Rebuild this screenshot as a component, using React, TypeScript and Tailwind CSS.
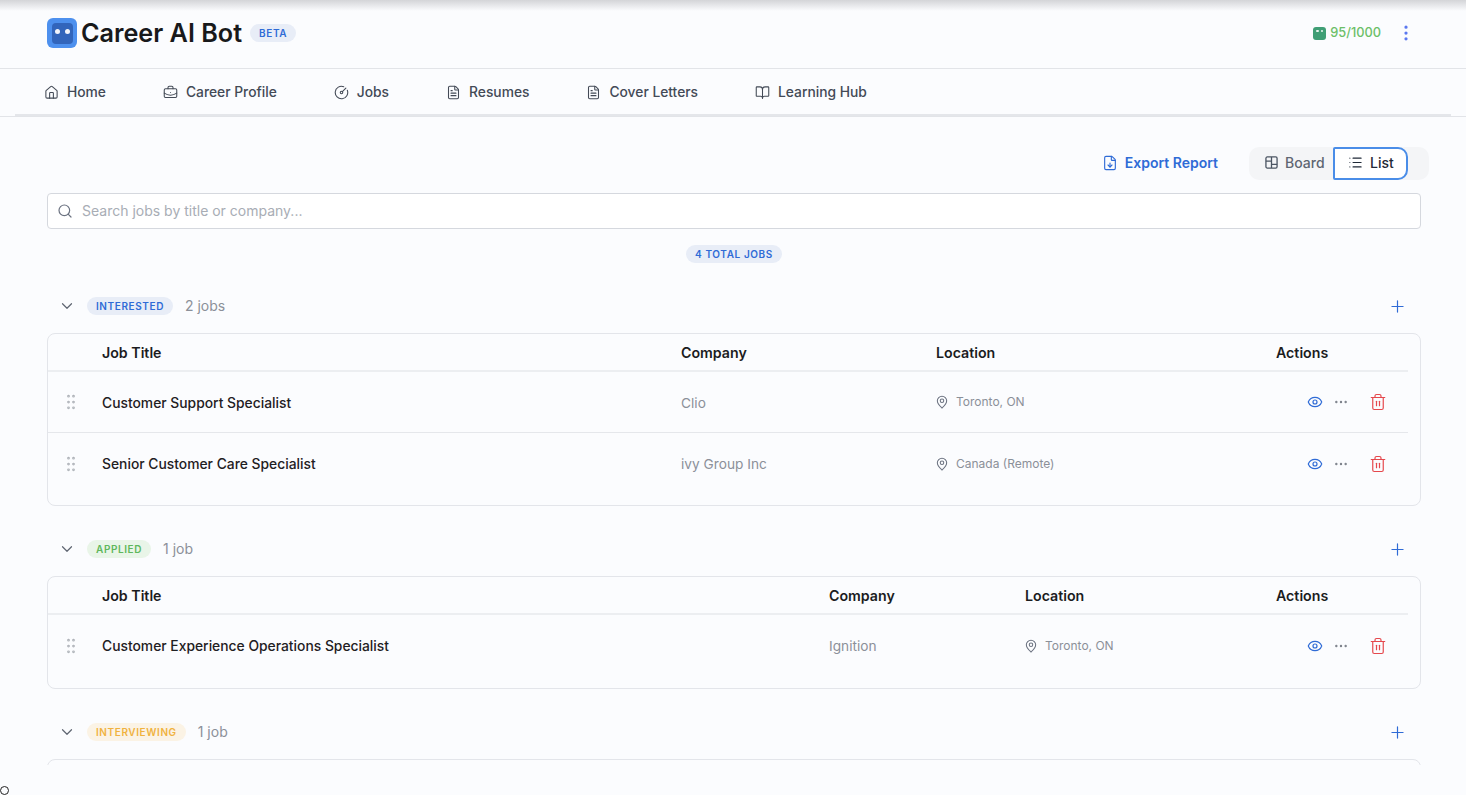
import { House, BriefcaseBusiness, CircleGauge, FileText, BookOpen, FileDown, List, Search, ChevronDown, Plus, GripVertical, MapPin, Eye, Ellipsis, Trash2, EllipsisVertical } from "lucide-react";

const tabs = [
  { label: "Home", Icon: House },
  { label: "Career Profile", Icon: BriefcaseBusiness },
  { label: "Jobs", Icon: CircleGauge },
  { label: "Resumes", Icon: FileText },
  { label: "Cover Letters", Icon: FileText },
  { label: "Learning Hub", Icon: BookOpen },
];

function BoardIcon() {
  return (
    <svg width="13" height="13" viewBox="0 0 14 14" fill="none" stroke="#4b5563" strokeWidth="1.4">
      <rect x="1" y="1" width="12" height="12" rx="1.5" />
      <path d="M7 1v12M1 5.5h6M7 9h6" />
    </svg>
  );
}

function GroupHead({ status, pill, count }: { status: string; pill: string; count: string }) {
  return (
    <div className="flex items-center h-[18px] pl-[11px] pr-[14px]">
      <ChevronDown size={18} strokeWidth={1.6} className="text-[#5f6672]" />
      <span className={`ml-[11px] h-[18px] px-[9px] pt-px rounded-full flex items-center text-[10px] font-semibold tracking-[0.06em] ${pill}`}>{status}</span>
      <span className="ml-3 text-[14px] -mt-px text-[#8b9099]">{count}</span>
      <Plus size={19} strokeWidth={1.5} className="ml-auto text-[#2f6bd6]" />
    </div>
  );
}

function Section({ status, pill, count, cols, rows, h }: { status: string; pill: string; count: string; cols: string; rows: string[][]; h: string }) {
  return (
    <section>
      <GroupHead status={status} pill={pill} count={count} />
      <div className={`mt-[18px] border border-[#e3e5ea] rounded-lg overflow-hidden ${h}`}>
        <div className="w-[1360px]">
          <div className={`grid ${cols} items-center h-[38px] pt-px border-b-2 border-[#eceef1] text-[14.2px] font-semibold text-[#1b1c1e]`}>
            <span />
            <span>Job Title</span>
            <span>Company</span>
            <span>Location</span>
            <span>Actions</span>
          </div>
          {rows.map((r, i) => (
            <div key={r[0]} className={`grid ${cols} items-center h-[61px] ${i < rows.length - 1 ? "border-b border-[#e5e7eb]" : ""}`}>
              <GripVertical size={20} strokeWidth={1.3} className="ml-[13px] text-[#aeb2b8]" />
              <span className="pt-[2px] text-[13.85px] font-medium text-[#1f2023]">{r[0]}</span>
              <span className="pt-[2px] text-[13.7px] text-[#8b9099]">{r[1]}</span>
              <span className="flex items-center text-[12px] text-[#8b9099]">
                <MapPin size={14} strokeWidth={1.8} className="-ml-px mr-[7px] text-[#6b7280]" />
                {r[2]}
              </span>
              <span className="flex items-center pl-[31px]">
                <Eye size={16} strokeWidth={1.8} className="text-[#2f6bd6]" />
                <Ellipsis size={16} strokeWidth={1.6} className="ml-[10px] text-[#7d828b]" />
                <Trash2 size={18} strokeWidth={1.6} className="ml-[20px] text-[#e5484d]" />
              </span>
            </div>
          ))}
        </div>
      </div>
    </section>
  );
}

export default function App() {
  return (
    <div className="relative h-[795px] w-full overflow-hidden bg-[#fbfcfe] font-['Inter',sans-serif]">
      <div className="absolute inset-x-0 top-0 h-[11px] bg-gradient-to-b from-[#d4d5d8] to-[#fbfcfe]" />
      <header className="relative flex items-center h-[69px] pb-[2px] pl-[47px] pr-[50px] border-b border-[#e2e4e8]">
        <div className="w-[30px] h-[30px] rounded-[6px] bg-[#4d90ee] flex items-center justify-center">
          <div className="w-[21px] h-[21px] rounded-[4px] bg-[#3265bb] flex justify-center gap-[5px] pt-[6px]">
            <span className="w-[5px] h-[5px] rounded-full bg-[#f2f5fb]" />
            <span className="w-[5px] h-[5px] rounded-full bg-[#f2f5fb]" />
          </div>
        </div>
        <h1 className="ml-1 mt-[2px] text-[25.2px] font-semibold text-[#18191b]">Career AI Bot</h1>
        <span className="ml-2 h-[18px] w-[46px] pt-px rounded-full bg-[#e8edf7] flex items-center justify-center text-[10px] font-semibold tracking-[0.06em] text-[#2f6bd6]">BETA</span>
        <div className="ml-auto w-[13px] h-[13px] rounded-[3px] bg-[#3f9e75] flex justify-center gap-[2px] pt-[3px]">
          <span className="w-[2.5px] h-[2.5px] rounded-full bg-[#eaf6f0]" />
          <span className="w-[2.5px] h-[2.5px] rounded-full bg-[#eaf6f0]" />
        </div>
        <span className="ml-[4px] text-[12.8px] font-medium text-[#6cbf68]">95/1000</span>
        <EllipsisVertical size={20} strokeWidth={1.9} className="ml-[15px] text-[#5b78f0]" />
      </header>
      <div className="border-b border-[#e2e4e8]">
        <nav className="mx-[15px] h-[47px] flex items-center pl-[29px] gap-[57px] border-b-2 border-[#e4e6ea]">
          {tabs.map(({ label, Icon }) => (
            <div key={label} className="flex items-center gap-[8px] pt-[2px] text-[13.8px] font-medium text-[#434a56]">
              <Icon size={15} strokeWidth={1.7} />
              {label}
            </div>
          ))}
        </nav>
      </div>
      <main className="h-[648px] overflow-hidden pl-[47px] pr-[45px]">
        <div className="flex items-center justify-end h-[33px] mt-[30px] -mr-[8px]">
          <div className="flex items-center gap-[7px] pb-[2px] text-[14px] font-semibold text-[#2f6bd6]">
            <FileDown size={16} strokeWidth={1.7} />
            Export Report
          </div>
          <div className="ml-[31px] flex h-[33px] w-[180px] rounded-[10px] bg-[#f4f5f7]">
            <div className="w-[84px] flex items-center pl-[16px] pb-[2px] gap-[7px] text-[14px] font-medium text-[#5f6672]">
              <BoardIcon />
              Board
            </div>
            <div className="w-[75px] flex items-center pl-[13px] pb-[2px] gap-[7px] text-[14px] font-medium text-[#1f2937] bg-white border-2 border-[#4a8de8] rounded-r-[10px] rounded-l-[2px]">
              <List size={15} strokeWidth={1.7} />
              List
            </div>
          </div>
        </div>
        <div className="mt-[13px] h-[36px] flex items-center bg-white border border-[#d5d8de] rounded-[4px] pl-[9px]">
          <Search size={16} strokeWidth={1.8} className="text-[#6b7280]" />
          <span className="ml-[9px] -mt-px text-[14px] text-[#a8adb5]">Search jobs by title or company...</span>
        </div>
        <div className="mt-4 flex justify-center">
          <span className="h-[18px] px-[9px] pt-px rounded-full bg-[#e8edf7] flex items-center text-[10px] font-semibold tracking-[0.06em] text-[#2f6bd6]">4 TOTAL JOBS</span>
        </div>
        <div className="mt-[34px] flex flex-col gap-[34px]">
          <Section
            status="INTERESTED"
            pill="bg-[#e8edf7] text-[#2f6bd6]"
            count="2 jobs"
            cols="grid-cols-[54px_579px_255px_340px_132px]"
            h="h-[173px]"
            rows={[
              ["Customer Support Specialist", "Clio", "Toronto, ON"],
              ["Senior Customer Care Specialist", "ivy Group Inc", "Canada (Remote)"],
            ]}
          />
          <Section
            status="APPLIED"
            pill="bg-[#e9f5e8] text-[#5fb85c]"
            count="1 job"
            cols="grid-cols-[54px_727px_196px_251px_132px]"
            h="h-[113px]"
            rows={[["Customer Experience Operations Specialist", "Ignition", "Toronto, ON"]]}
          />
          <section>
            <GroupHead status="INTERVIEWING" pill="bg-[#fbf3e5] text-[#f0b23e]" count="1 job" />
            <div className="mt-[18px] h-[100px] border border-[#e3e5ea] rounded-lg" />
          </section>
        </div>
      </main>
      <div className="absolute left-0 top-[786px] w-[9px] h-[9px] rounded-full border-[1.5px] border-[#222]" />
    </div>
  );
}
